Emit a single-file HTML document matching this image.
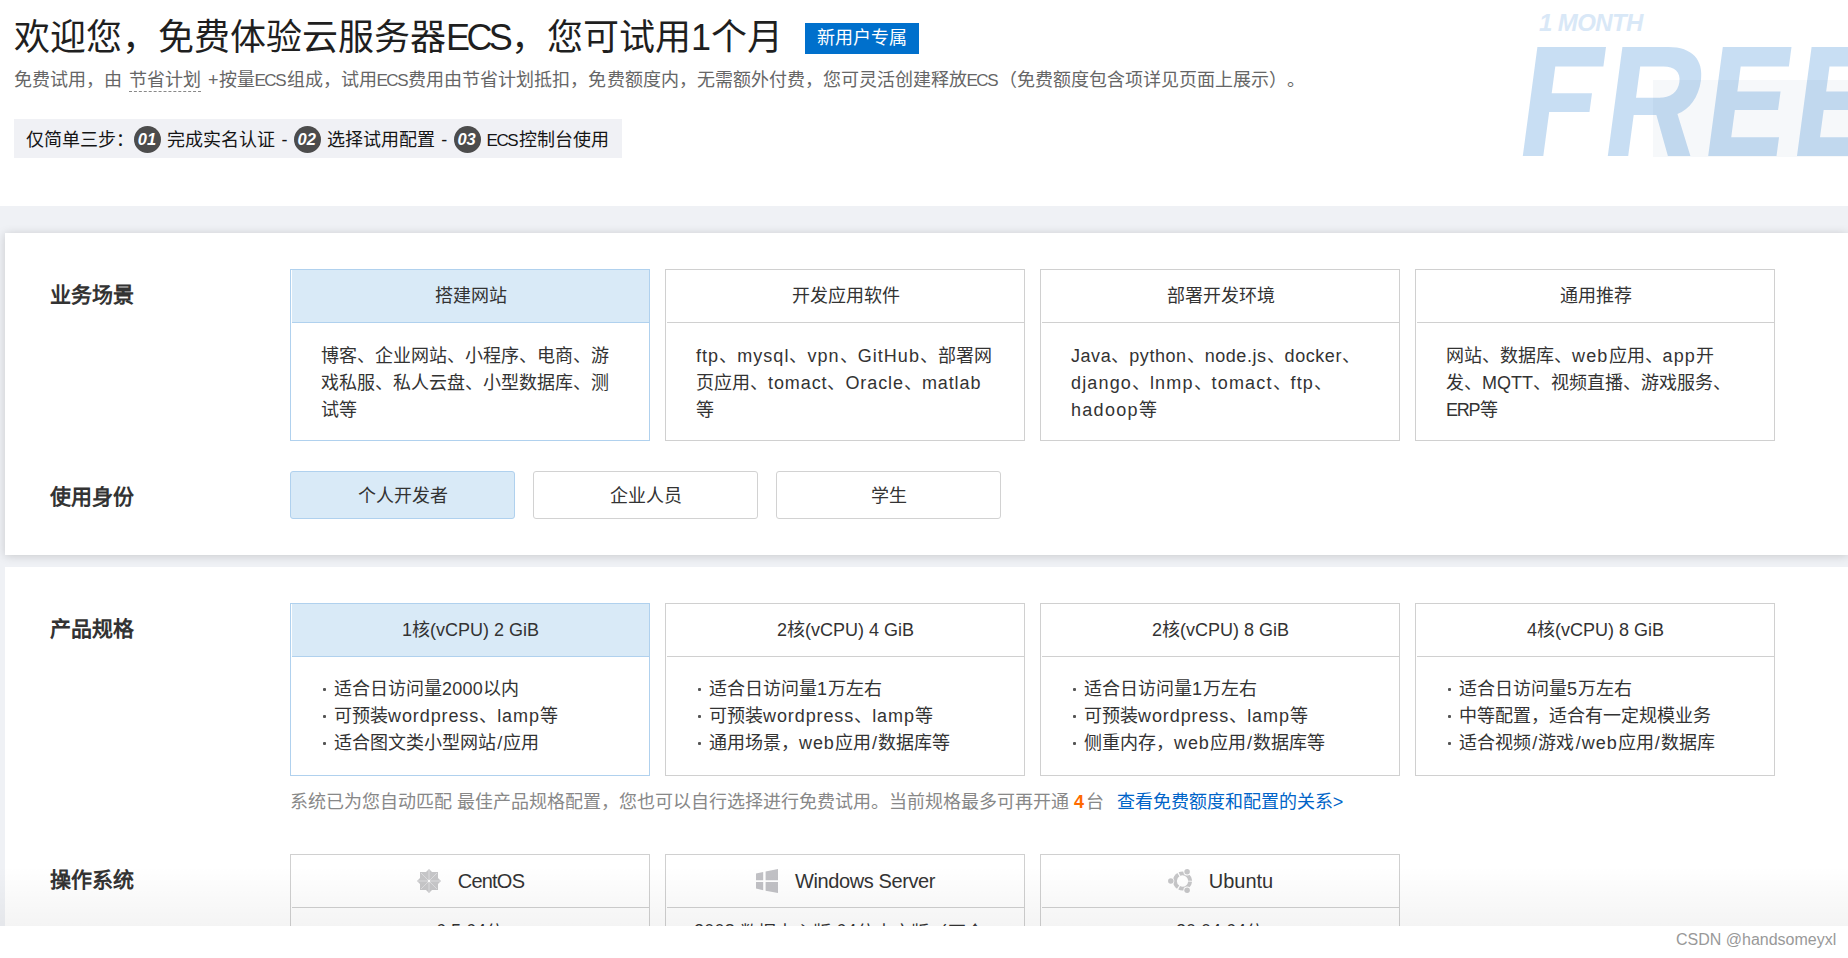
<!DOCTYPE html>
<html lang="zh-CN">
<head>
<meta charset="utf-8">
<title>ECS</title>
<style>
*{box-sizing:border-box;margin:0;padding:0}
html,body{width:1848px;height:958px;overflow:hidden;background:#fff}
body{text-spacing-trim:space-all;font-family:"Liberation Sans",sans-serif;color:#333;position:relative;font-size:18px;line-height:27px}
.a{position:absolute}
.nw{white-space:nowrap}
#title{left:14px;top:13.5px;font-size:36px;line-height:48px;color:#1f1f1f}
#badge{left:805px;top:23px;width:114px;height:31px;background:#0070cc;color:#fff;font-size:18px;line-height:31px;text-align:center}
#sub{left:14px;top:66.5px;font-size:18px;line-height:27px;color:#666}
#sub u{text-decoration:none;border-bottom:1px dashed #888;padding-bottom:1px;margin:0 2px 0 7px}
.e{font-size:17px;letter-spacing:-1.5px;margin-right:1.5px}
#steps{left:14px;top:119px;width:608px;height:39px;background:#f0f1f5;font-size:18px;line-height:39px;color:#151515;padding-left:12px;word-spacing:1.4px}
#steps>span.w{position:relative;top:1.5px}
.num{display:inline-block;width:27px;height:27px;border-radius:50%;background:#4c4c4c;color:#fff;font-weight:bold;font-style:italic;font-size:16.5px;line-height:27px;text-align:center;vertical-align:middle;margin:-3px 6px 0 0;letter-spacing:0;word-spacing:0;text-indent:-1px}
#band{left:0;top:206px;width:1848px;height:720px;background:#eff1f5}
.panel{left:5px;width:1843px;background:#fff}
#p1{top:233px;height:322px;box-shadow:0 1px 9px rgba(0,0,0,.17)}
#p2{top:567px;height:359px}
.lab{left:50px;font-size:21px;line-height:30px;font-weight:bold;color:#333}
.card{width:360px;border:1px solid #d0d0d0;background:#fff}
.card .h{height:53px;line-height:53px;text-align:center;font-size:18px;color:#333;border-bottom:1px solid #d0d0d0;margin:0 0 0 1px;position:relative}
.card .b{padding:19.5px 30px 0 30px;white-space:nowrap;font-size:18px;line-height:27px;color:#333}
.card.sel{border-color:#b0d1ee}
.card.sel .h{background:#d9eaf7;border-bottom-color:#b0d1ee}
.btn{width:225px;height:48px;border:1px solid #d2d2d2;border-radius:3px;text-align:center;line-height:46px;padding-top:1px;font-size:18px;color:#333;background:#fff}
.btn.sel{background:#d9eaf7;border-color:#b0d1ee}
.c1{left:290px}.c2{left:665px}.c3{left:1040px}.c4{left:1415px}

.card.sp .b{padding:19px 30px 0 30px}
.card.sp .b i{display:inline-block;width:3px;height:3px;border-radius:1px;background:#555;vertical-align:middle;margin:0 8.5px 2px 1.5px}
#note{left:290px;top:788.5px;font-size:18px;line-height:27px;color:#888}
#note b{color:#ff6a00;letter-spacing:1.5px}
#note .lk{color:#0064c8;margin-left:8px}
.card.os .h svg{vertical-align:middle;margin:-2px 17px 0 0}
.card.os .h span{vertical-align:middle;font-size:20px;letter-spacing:-.8px;position:relative;top:-1px}
.card.os .b2{text-align:center;line-height:27px;padding-top:12px;font-size:18px;white-space:nowrap}
#fade{left:0;top:866px;width:1848px;height:60px;background:linear-gradient(to bottom,rgba(0,0,0,0),rgba(0,0,0,.045))}
#foot{left:0;top:926px;width:1848px;height:32px;background:#fff}
#wm{left:1676px;top:929px;font-size:16px;line-height:22px;color:#999}
.l{letter-spacing:.9px}
.s{padding:0 1.2px}
.d{position:relative;top:-2px}
.j{display:inline-block;white-space:nowrap;text-align:justify;text-align-last:justify;vertical-align:baseline}
.sp4{display:inline-block;width:5px}
</style>
</head>
<body>
<div class="a nw" id="title"><span class="j" style="width:768.9px">欢迎您，免费体验云服务器<span style="letter-spacing:-3.6px">ECS</span><span style="margin-left:1.6px">，</span>您可试用1个月</span></div>
<div class="a nw" id="badge"><span class="j" style="width:90.0px">新用户专属</span></div>
<div class="a nw" id="sub"><span class="j" style="width:108.0px">免费试用，由</span><u><span class="j" style="width:72.0px">节省计划</span></u><span class="sp4"></span><span class="j" style="width:1096.5px">+按量<span class="e">ECS</span>组成，试用<span class="e">ECS</span>费用由节省计划抵扣，免费额度内，无需额外付费，您可灵活创建释放<span class="e">ECS</span>（免费额度包含项详见页面上展示）。</span></div>
<div class="a nw" id="steps"><span class="w"><span class="j" style="width:108.0px">仅简单三步：</span><span class="num">01</span><span class="j" style="width:108.0px">完成实名认证</span> - <span class="num">02</span><span class="j" style="width:108.0px">选择试用配置</span> - <span class="num">03</span><span class="j" style="width:122.0px"><span class="e">ECS</span>控制台使用</span></span></div>

<svg class="a" id="free" style="left:1500px;top:0" width="348" height="206" viewBox="1500 0 348 206">
<g fill="#c4dcf2" fill-opacity=".93" transform="translate(20.9 0) skewX(-7.63)">
<!-- F -->
<path d="M1522.8 47h68.6v19.4h-48.1v26.9h40.3v18.8h-40.3v43.9h-20.5z"/>
<!-- R -->
<path d="M1607.8 47h46c24 0 37 13 37 33.5 0 17-8 29-19 33.5l18.6 42h-22.5l-17-41h-22.7v41h-20.4zM1628.2 66.4v31.3h23c11.5 0 18.3-5.5 18.3-15.7 0-10-6.8-15.6-18.3-15.6z"/>
<!-- E -->
<path d="M1708.2 47h68.7v19.4h-48.2v25h43.2v18.6h-43.2v27.2h47.8v18.8h-68.3z"/>
<path d="M1797 47h68.7v19.4h-48.2v25h43.2v18.6h-43.2v27.2h47.8v18.8h-68.3z"/>
</g>
<rect x="1653" y="80" width="195" height="77" fill="rgb(30,70,120)" fill-opacity=".04"/>
<text x="1539" y="31" font-family="Liberation Sans, sans-serif" font-size="24" font-weight="bold" font-style="italic" fill="#d9e8f7" letter-spacing="-0.6">1 MONTH</text>
</svg>

<div class="a" id="band"></div>
<div class="a panel" id="p1"></div>
<div class="a panel" id="p2"></div>

<div class="a lab nw" style="top:279.5px"><span class="j" style="width:84.0px">业务场景</span></div>
<div class="a lab nw" style="top:481.5px"><span class="j" style="width:84.0px">使用身份</span></div>
<div class="a lab nw" style="top:613.5px"><span class="j" style="width:84.0px">产品规格</span></div>
<div class="a lab nw" style="top:864.5px"><span class="j" style="width:84.0px">操作系统</span></div>

<!-- row 1 -->
<div class="a card sel c1" style="top:269px;height:172px"><div class="h"><span class="j" style="width:72.0px">搭建网站</span></div><div class="b"><span class="j" style="width:288.1px">博客、企业网站、小程序、电商、游</span><br><span class="j" style="width:288.1px">戏私服、私人云盘、小型数据库、测</span><br><span class="j" style="width:36.0px">试等</span></div></div>
<div class="a card c2" style="top:269px;height:172px"><div class="h"><span class="j" style="width:108.0px">开发应用软件</span></div><div class="b"><span class="j" style="width:296.0px"><span class="l" style="letter-spacing:1.05px">ftp</span>、<span class="l" style="letter-spacing:1.05px">mysql</span>、<span class="l" style="letter-spacing:1.05px">vpn</span>、<span class="l" style="letter-spacing:1.05px">GitHub</span>、部署网</span><br><span class="j" style="width:285.3px">页应用、<span class="l">tomact</span>、<span class="l">Oracle</span>、<span class="l">matlab</span></span><br><span class="j" style="width:18.1px">等</span></div></div>
<div class="a card c3" style="top:269px;height:172px"><div class="h"><span class="j" style="width:108.0px">部署开发环境</span></div><div class="b"><span class="j" style="width:288.9px"><span class="l" style="letter-spacing:0.55px">Java</span>、<span class="l" style="letter-spacing:0.55px">python</span>、<span class="l" style="letter-spacing:0.55px">node.js</span>、<span class="l" style="letter-spacing:0.55px">docker</span>、</span><br><span class="j" style="width:261.0px"><span class="l" style="letter-spacing:1.15px">django</span>、<span class="l" style="letter-spacing:1.15px">lnmp</span>、<span class="l" style="letter-spacing:1.15px">tomact</span>、<span class="l" style="letter-spacing:1.15px">ftp</span>、</span><br><span class="j" style="width:85.9px"><span class="l" style="letter-spacing:1.3px">hadoop</span>等</span></div></div>
<div class="a card c4" style="top:269px;height:172px"><div class="h"><span class="j" style="width:72.0px">通用推荐</span></div><div class="b"><span class="j" style="width:268.0px">网站、数据库、<span class="l" style="letter-spacing:1.15px">web</span>应用、<span class="l" style="letter-spacing:1.15px">app</span>开</span><br><span class="j" style="width:285.1px">发、<span class="l" style="letter-spacing:0px">MQTT</span>、视频直播、游戏服务、</span><br><span class="j" style="width:51.5px"><span class="l" style="letter-spacing:-1.2px">ERP</span>等</span></div></div>

<!-- row 2 -->
<div class="a btn sel nw" style="left:290px;top:471px"><span class="j" style="width:90.0px">个人开发者</span></div>
<div class="a btn nw" style="left:533px;top:471px"><span class="j" style="width:72.0px">企业人员</span></div>
<div class="a btn nw" style="left:776px;top:471px"><span class="j" style="width:36.0px">学生</span></div>

<!-- row 3 : spec -->
<div class="a card sel c1 sp" style="top:603px;height:173px"><div class="h"><span class="j" style="width:137.1px">1核(vCPU) 2 GiB</span></div><div class="b"><i></i><span class="j" style="width:184.9px">适合日访问量<span class="l" style="letter-spacing:.2px">2000</span>以内</span><br><i></i><span class="j" style="width:223.8px">可预装<span class="l">wordpress</span>、<span class="l">lamp</span>等</span><br><i></i><span class="j" style="width:205.4px">适合图文类小型网站<span class="s">/</span>应用</span></div></div>
<div class="a card c2 sp" style="top:603px;height:173px"><div class="h"><span class="j" style="width:137.1px">2核(vCPU) 4 GiB</span></div><div class="b"><i></i><span class="j" style="width:173.0px">适合日访问量<span class="l">1</span>万左右</span><br><i></i><span class="j" style="width:223.8px">可预装<span class="l">wordpress</span>、<span class="l">lamp</span>等</span><br><i></i><span class="j" style="width:241.2px">通用场景，<span class="l">web</span>应用<span class="s">/</span>数据库等</span></div></div>
<div class="a card c3 sp" style="top:603px;height:173px"><div class="h"><span class="j" style="width:137.1px">2核(vCPU) 8 GiB</span></div><div class="b"><i></i><span class="j" style="width:173.0px">适合日访问量<span class="l">1</span>万左右</span><br><i></i><span class="j" style="width:223.8px">可预装<span class="l">wordpress</span>、<span class="l">lamp</span>等</span><br><i></i><span class="j" style="width:241.2px">侧重内存，<span class="l">web</span>应用<span class="s">/</span>数据库等</span></div></div>
<div class="a card c4 sp" style="top:603px;height:173px"><div class="h"><span class="j" style="width:137.1px">4核(vCPU) 8 GiB</span></div><div class="b"><i></i><span class="j" style="width:173.0px">适合日访问量<span class="l">5</span>万左右</span><br><i></i><span class="j" style="width:252.1px">中等配置，适合有一定规模业务</span><br><i></i><span class="j" style="width:256.0px">适合视频<span class="s">/</span>游戏<span class="s">/</span><span class="l">web</span>应用<span class="s">/</span>数据库</span></div></div>

<div class="a nw" id="note"><span class="j" style="width:779.1px">系统已为您自动匹配 最佳产品规格配置，您也可以自行选择进行免费试用。当前规格最多可再开通</span> <b>4</b><span class="j" style="width:18.1px">台</span> <span class="j lk" style="width:226.6px">查看免费额度和配置的关系&gt;</span></div>

<!-- row 4 : os -->
<div class="a card c1 os" style="top:854px;height:120px"><div class="h"><svg width="24" height="24" viewBox="0 0 24 24"><g fill="#c6c6c8"><rect x="3" y="3" width="18" height="18"/><rect x="3.5" y="3.5" width="17" height="17" transform="rotate(45 12 12)"/></g><g stroke="#dcdcde" stroke-width="1" fill="none"><path d="M12 0.5v23M0.5 12h23M4 4l16 16M20 4L4 20"/></g><circle cx="12" cy="12" r="1.2" fill="#fff"/></svg><span>CentOS</span></div><div class="b2"><span class="d">6.5 64</span>位</div></div>
<div class="a card c2 os" style="top:854px;height:120px"><div class="h"><svg width="22" height="24" viewBox="0 0 22 24"><path fill="#c1c1c5" d="M0 4.6l7.2-1.7v8.3H0zM9.6 2.4L22 0v11.2H9.6zM0 12.9h7.2v8.3L0 19.5zM9.6 12.9H22V24L9.6 21.7z"/></svg><span style="letter-spacing:-.4px">Windows Server</span></div><div class="b2" style="text-align:left;padding-left:28px;letter-spacing:.2px"><span class="d">2008</span> 数据中心版 <span class="d">64</span>位中文版（不含</div></div>
<div class="a card c3 os" style="top:854px;height:120px"><div class="h"><svg width="24" height="24" viewBox="0 0 24 24"><circle cx="14.5" cy="12" r="7.6" fill="none" stroke="#c6c6c8" stroke-width="3.9" stroke-dasharray="14.72 1.2" stroke-dashoffset="-0.6"/><g fill="#fff"><circle cx="19.1" cy="2.8" r="3.7"/><circle cx="19.1" cy="21.2" r="3.7"/><circle cx="2.8" cy="12" r="3.5"/></g><g fill="#c6c6c8"><circle cx="2.8" cy="12" r="2.75"/><circle cx="19.1" cy="2.8" r="2.75"/><circle cx="19.1" cy="21.2" r="2.75"/></g></svg><span style="letter-spacing:0">Ubuntu</span></div><div class="b2"><span class="d">20.04 64</span>位</div></div>

<div class="a" id="fade"></div>
<div class="a" id="foot"></div>
<div class="a nw" id="wm">CSDN @handsomeyxl</div>
</body>
</html>
